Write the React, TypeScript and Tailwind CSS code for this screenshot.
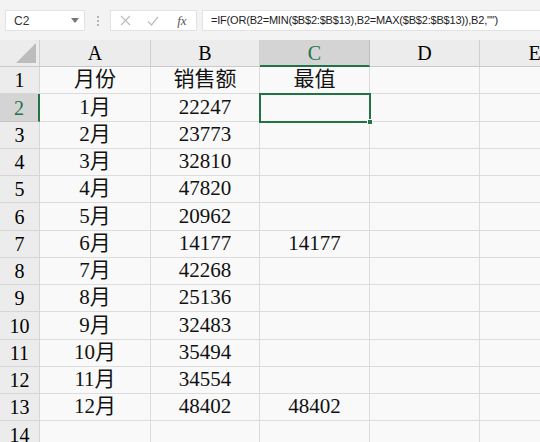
import React from "react";

const cols = [
  { name: "A", w: 111 },
  { name: "B", w: 109 },
  { name: "C", w: 110 },
  { name: "D", w: 110 },
  { name: "E", w: 110 },
];

const rowHeights = [27, 28, 27, 27, 27, 28, 27, 27, 27, 28, 27, 27, 27, 28];

const data: string[][] = [
  ["月份", "销售额", "最值"],
  ["1月", "22247", ""],
  ["2月", "23773", ""],
  ["3月", "32810", ""],
  ["4月", "47820", ""],
  ["5月", "20962", ""],
  ["6月", "14177", "14177"],
  ["7月", "42268", ""],
  ["8月", "25136", ""],
  ["9月", "32483", ""],
  ["10月", "35494", ""],
  ["11月", "34554", ""],
  ["12月", "48402", "48402"],
  ["", "", ""],
];

const serif = { fontFamily: '"Liberation Serif", "Noto Sans CJK SC", serif' };

export default function App() {
  return (
    <div className="w-[540px] h-[442px] overflow-hidden bg-[#f3f3f3] relative">
      {/* formula bar */}
      <div className="h-[40px] flex items-start pt-[10px] pl-[5px] gap-0" style={{ fontFamily: '"Liberation Sans", "Noto Sans CJK SC", sans-serif' }}>
        <div className="w-[80px] h-[21px] bg-white border border-[#e2e2e2] flex items-center justify-between pl-[8px] pr-[5px] text-[12px] text-[#333]">
          <span>C2</span>
          <svg width="8" height="5" viewBox="0 0 8 5"><path d="M0 0 L8 0 L4 5 Z" fill="#777" /></svg>
        </div>
        <div className="w-[25px] h-[21px] flex flex-col items-center justify-center gap-[2px]">
          <span className="w-[2px] h-[2px] bg-[#b5b5b5]" />
          <span className="w-[2px] h-[2px] bg-[#b5b5b5]" />
          <span className="w-[2px] h-[2px] bg-[#b5b5b5]" />
        </div>
        <div className="w-[87px] h-[21px] bg-white border border-[#e2e2e2] flex items-center">
          <div className="w-[29px] flex justify-center">
            <svg width="11" height="11" viewBox="0 0 11 11"><path d="M1 1 L10 10 M10 1 L1 10" stroke="#bdbdbd" strokeWidth="1.2" /></svg>
          </div>
          <div className="w-[29px] flex justify-center">
            <svg width="12" height="10" viewBox="0 0 12 10"><path d="M1 5.5 L4.5 9 L11 1" stroke="#bdbdbd" strokeWidth="1.2" fill="none" /></svg>
          </div>
          <div className="w-[29px] flex justify-center text-[13px] italic text-[#555]" style={serif}>fx</div>
        </div>
        <div className="ml-[5px] flex-1 h-[21px] bg-white border border-[#e2e2e2] border-r-0 flex items-center pl-[8px] text-[11px] tracking-[-0.2px] text-[#222] whitespace-nowrap overflow-hidden">
          =IF(OR(B2=MIN($B$2:$B$13),B2=MAX($B$2:$B$13)),B2,"")
        </div>
      </div>

      {/* header row */}
      <div className="flex h-[27px] bg-[#ececec] border-b border-[#c9c9c9]" style={serif}>
        <div className="w-[40px] shrink-0 border-r border-[#d0d0d0] relative">
          <svg className="absolute right-[3px] bottom-[3px]" width="20" height="20" viewBox="0 0 20 20"><path d="M20 0 L20 20 L0 20 Z" fill="#bcbcbc" /></svg>
        </div>
        {cols.map((c) => (
          <div
            key={c.name}
            style={{ width: c.w }}
            className={
              c.name === "C"
                ? "shrink-0 flex items-center justify-center text-[20px] text-[#217346] bg-[#d4d4d4] border-r border-[#bfbfbf] border-b-2 border-b-[#217346] -mb-px"
                : "shrink-0 flex items-center justify-center text-[20px] text-black border-r border-[#d0d0d0]"
            }
          >
            {c.name}
          </div>
        ))}
      </div>

      {/* data rows */}
      <div className="relative" style={serif}>
        {data.map((row, i) => (
          <div key={i} className="flex" style={{ height: rowHeights[i] }}>
            <div
              className={
                i === 1
                  ? "w-[40px] shrink-0 flex items-center justify-center text-[20px] text-[#217346] bg-[#d4d4d4] border-r-2 border-r-[#217346] border-b border-[#c5c5c5]"
                  : "w-[40px] shrink-0 flex items-center justify-center text-[20px] text-black bg-[#ececec] border-r border-[#c9c9c9] border-b border-[#d6d6d6]"
              }
            >
              {i + 1}
            </div>
            {cols.map((c, j) => (
              <div
                key={c.name}
                style={{ width: c.w }}
                className="shrink-0 flex items-center justify-center text-[21px] text-[#111] bg-[#f9f9f9] border-r border-b border-[#dcdcdc]"
              >
                {row[j] ?? ""}
              </div>
            ))}
          </div>
        ))}
        {/* selection box on C2 */}
        <div className="absolute left-[259px] top-[26px] w-[112px] h-[30px] border-2 border-[#217346] pointer-events-none">
          <div className="absolute right-[-4px] bottom-[-4px] w-[6px] h-[6px] bg-[#217346] border border-white" />
        </div>
      </div>
    </div>
  );
}
